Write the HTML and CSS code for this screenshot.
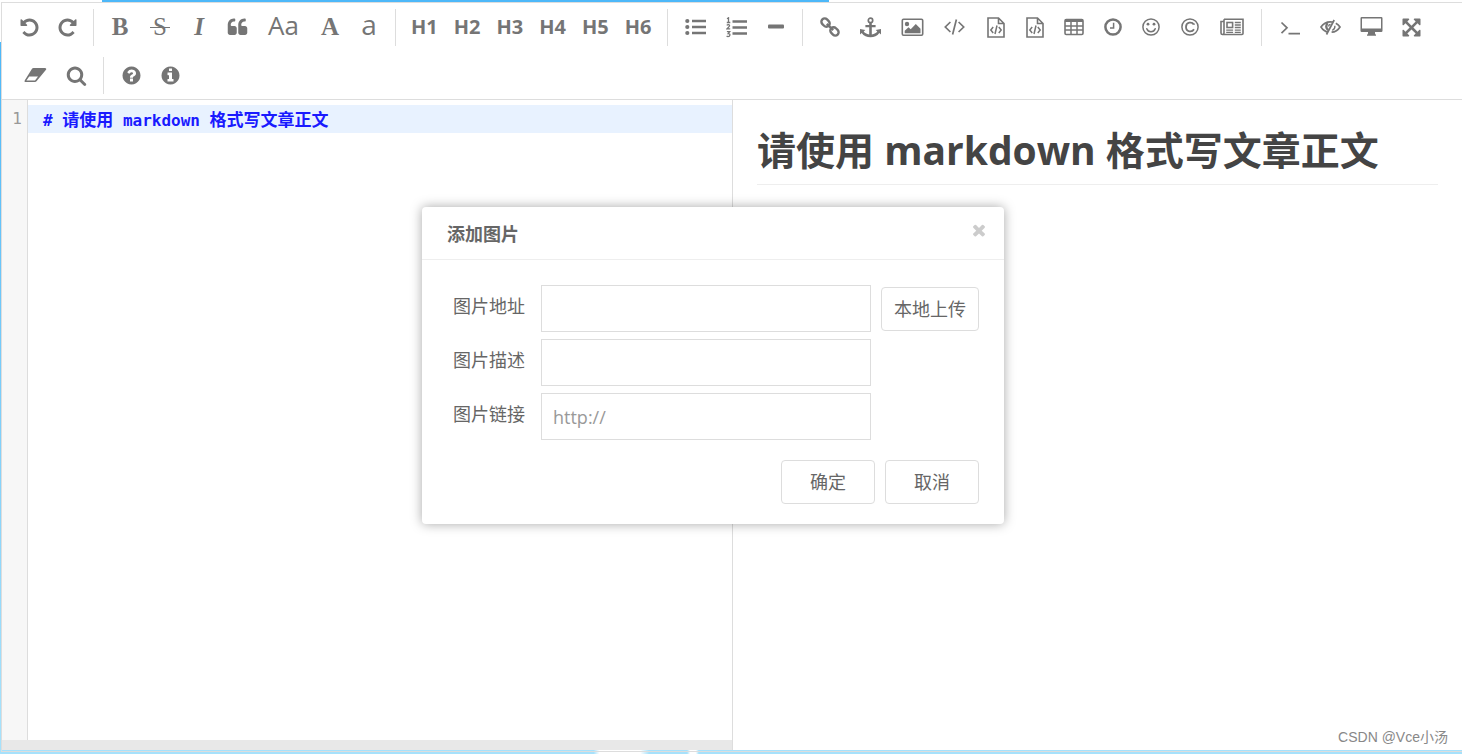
FILE: index.html
```
<!DOCTYPE html>
<html lang="zh-CN">
<head>
<meta charset="utf-8">
<title>Markdown 编辑器</title>
<link rel="stylesheet" href="styles.css">
</head>
<body class="page">
<main class="editor">
  <ul class="toolbar">
    <li><button class="tool" type="button" aria-label="撤销"><svg class="icon" width="21" height="21" viewBox="0 0 1792 1792"><path d="M1664 896q0 156-61 298t-164 245-245 164-298 61q-172 0-327-72.500t-264-204.500q-7-10-6.500-22.500t8.500-20.500l137-138q10-9 25-9 16 2 23 12 73 95 179 147t225 52q104 0 198.500-40.500t163.500-109.500 109.500-163.500 40.500-198.500-40.500-198.500-109.500-163.500-163.500-109.500-198.500-40.500q-98 0-188 35.500t-160 101.500l137 138q31 30 14 69-17 40-59 40h-448q-26 0-45-19t-19-45v-448q0-42 40-59 39-17 69 14l130 129q107-101 244.500-156.500t284.500-55.500q156 0 298 61t245 164 164 245 61 298z"/></svg></button></li>
    <li><button class="tool" type="button" aria-label="重做"><svg class="icon" width="21" height="21" viewBox="0 0 1792 1792"><path d="M1664 256v448q0 26-19 45t-45 19h-448q-42 0-59-40-17-39 14-69l138-138q-148-137-349-137-104 0-198.500 40.500t-163.500 109.500-109.500 163.500-40.500 198.500 40.500 198.500 109.500 163.500 163.500 109.500 198.500 40.500q119 0 225-52t179-147q7-10 23-12 15 0 25 9l137 138q9 8 9.500 20.500t-7.500 22.500q-109 132-264 204.500t-327 72.500q-156 0-298-61t-245-164-164-245-61-298 61-298 164-245 245-164 298-61q147 0 284.500 55.500t244.500 156.500l130-129q29-31 70-14 39 17 39 59z"/></svg></button></li>
    <li class="divider"></li>
    <li><button class="tool serif" type="button" aria-label="粗体">B</button></li>
    <li><button class="tool wide serif strike" type="button" aria-label="删除线">S</button></li>
    <li><button class="tool narrow serif italic" type="button" aria-label="斜体">I</button></li>
    <li><button class="tool medium" type="button" aria-label="引用"><svg class="icon" width="21" height="21" viewBox="0 0 1792 1792"><path d="M832 960v384q0 80-56 136t-136 56h-384q-80 0-136-56t-56-136v-704q0-104 40.500-198.500t109.500-163.500 163.500-109.500 198.500-40.500h64q26 0 45 19t19 45v128q0 26-19 45t-45 19h-64q-106 0-181 75t-75 181v32q0 40 28 68t68 28h224q80 0 136 56t56 136zM1728 960v384q0 80-56 136t-136 56h-384q-80 0-136-56t-56-136v-704q0-104 40.500-198.500t109.500-163.500 163.500-109.500 198.500-40.500h64q26 0 45 19t19 45v128q0 26-19 45t-45 19h-64q-106 0-181 75t-75 181v32q0 40 28 68t68 28h224q80 0 136 56t56 136z"/></svg></button></li>
    <li><button class="tool case" type="button" aria-label="首字母大写">Aa</button></li>
    <li><button class="tool medium serif" type="button" aria-label="大写">A</button></li>
    <li><button class="tool lower" type="button" aria-label="小写">a</button></li>
    <li class="divider"></li>
    <li><button class="tool heading" type="button">H1</button></li>
    <li><button class="tool heading" type="button">H2</button></li>
    <li><button class="tool heading" type="button">H3</button></li>
    <li><button class="tool heading" type="button">H4</button></li>
    <li><button class="tool heading" type="button">H5</button></li>
    <li><button class="tool heading" type="button">H6</button></li>
    <li class="divider"></li>
    <li><button class="tool wide" type="button" aria-label="无序列表"><svg class="icon" width="21" height="18" viewBox="0 0 21 18"><circle cx="2.300" cy="3" r="2.100"/><circle cx="2.300" cy="9" r="2.100"/><circle cx="2.300" cy="15" r="2.100"/><path d="M7 1.700h14v2.600H7zM7 7.700h14v2.600H7zM7 13.700h14v2.600H7z"/></svg></button></li>
    <li><button class="tool medium" type="button" aria-label="有序列表"><svg class="icon" width="21" height="21" viewBox="0 0 21 21"><path d="M6.500 3.200H21v2.600H6.500zM6.500 9.200H21v2.600H6.500zM6.500 15.200H21v2.600H6.500z"/><path class="line" stroke-width="1.300" d="M1 1.700l1.500-.9v4.700M.8 5.500h3.500M.8 8.400c1-1.200 3-.8 2.700.5-.2 1-1.800 1.700-2.600 3h3.300M.9 14.600h2.800l-1.500 2c2.600 0 2 3-.2 3q-.8 0-1.400-.5"/></svg></button></li>
    <li><button class="tool" type="button" aria-label="分隔线"><svg class="icon" width="16" height="18" viewBox="0 0 16 18"><rect y="6.500" width="16" height="4" rx="1"/></svg></button></li>
    <li class="divider"></li>
    <li><button class="tool medium" type="button" aria-label="链接"><svg class="icon line" width="20" height="20" viewBox="0 0 20 20"><g stroke-width="2.400" transform="rotate(45 10 10)"><rect x="-.8" y="6.700" width="9" height="6.600" rx="3.300"/><rect x="11.800" y="6.700" width="9" height="6.600" rx="3.300"/><path d="M5.500 10h9"/></g></svg></button></li>
    <li><button class="tool wide" type="button" aria-label="锚点"><svg class="icon" width="21" height="21" viewBox="0 0 21 21"><circle class="line" cx="10.500" cy="3.400" r="2.200" stroke-width="1.700"/><path d="M9.200 5.500h2.600V8h3.800v2.300h-3.800v7.100c2.600-.4 4.700-1.600 5.500-2.900l-1.600-1.500 5.300-.9v5.400l-1.700-1.600c-2 2.900-5.200 4.300-8.800 4.300s-6.800-1.400-8.800-4.300L0 17.500v-5.400l5.300.9-1.600 1.500c.8 1.300 2.900 2.500 5.500 2.900v-7.100H5.400V8h3.800z"/></svg></button></li>
    <li><button class="tool wide" type="button" aria-label="添加图片"><svg class="icon" width="23" height="19" viewBox="0 0 23 19"><rect class="line" x="1.300" y="1.300" width="20.400" height="16" rx="1.200" stroke-width="1.600"/><circle cx="6" cy="6" r="2.200"/><path d="M3.700 15.200v-2.400l3.800-3.600 2.200 2 5.100-5.300 4.700 4.800v4.500z"/></svg></button></li>
    <li><button class="tool wide" type="button" aria-label="行内代码"><svg class="icon line" width="21" height="18" viewBox="0 0 21 18"><path stroke-width="1.700" d="M6.400 4L1.300 9l5.100 5M14.600 4l5.100 5-5.100 5M12.400 1.500l-3.800 15"/></svg></button></li>
    <li><button class="tool medium" type="button" aria-label="预格式文本"><svg class="icon line" width="18" height="21" viewBox="0 0 18 21"><path stroke-width="1.600" d="M1 1h10.500L17 6.500V20H1zM11.500 1v5.500H17"/><path stroke-width="1.500" d="M6.200 10l-2.400 3 2.400 3M11.800 10l2.400 3-2.400 3M10 8.500l-2 8.500"/></svg></button></li>
    <li><button class="tool" type="button" aria-label="代码块"><svg class="icon line" width="18" height="21" viewBox="0 0 18 21"><path stroke-width="1.600" d="M1 1h10.500L17 6.500V20H1zM11.500 1v5.500H17"/><path stroke-width="1.500" d="M6.200 10l-2.400 3 2.400 3M11.800 10l2.400 3-2.400 3M10 8.500l-2 8.500"/></svg></button></li>
    <li><button class="tool medium" type="button" aria-label="表格"><svg class="icon line" width="20" height="18" viewBox="0 0 20 18"><rect x="1" y="1.500" width="18" height="15" rx="1.200" stroke-width="1.600"/><path stroke-width="3" d="M1 2.500h18"/><path stroke-width="1.500" d="M1 8h18M1 12h18M7 2v14M13 2v14"/></svg></button></li>
    <li><button class="tool" type="button" aria-label="日期时间"><svg class="icon line" width="18" height="18" viewBox="0 0 18 18"><circle cx="9" cy="9" r="7.600" stroke-width="2.500"/><path stroke-width="1.500" d="M9.600 4.800v5.100H6"/></svg></button></li>
    <li><button class="tool" type="button" aria-label="表情"><svg class="icon" width="18" height="18" viewBox="0 0 18 18"><circle class="line" cx="9" cy="9" r="8.100" stroke-width="1.500"/><circle cx="6" cy="6.200" r="1.400"/><circle cx="12" cy="6.200" r="1.400"/><path class="line" stroke-width="1.500" stroke-linecap="round" d="M4.800 10.800c1.400 4 7 4 8.400 0"/></svg></button></li>
    <li><button class="tool medium" type="button" aria-label="版权符号"><svg class="icon line" width="18" height="18" viewBox="0 0 18 18"><circle cx="9" cy="9" r="8.100" stroke-width="1.500"/><path stroke-width="1.800" d="M13 6.800V5.500M12.700 6.500c-1.600-3-7.700-2.600-7.700 2.500s6.100 5.500 8 2.300"/></svg></button></li>
    <li><button class="tool wider" type="button" aria-label="分页"><svg class="icon line" width="24" height="18" viewBox="0 0 24 18"><path stroke-width="1.600" d="M4 1.200h19v14.300q0 1-1 1H2.500q-1.500 0-1.500-1.500V3.500h3M4 1.200V15q0 1.500-1.500 1.500"/><rect x="7" y="4.500" width="5.600" height="5" stroke-width="1.600"/><path stroke-width="1.300" d="M14.800 4.500h6M14.800 7h6M14.800 9.500h6M6.200 12.200h6.900M14.800 12.200h6M6.200 14.300h6.900M14.800 14.300h6"/></svg></button></li>
    <li class="divider"></li>
    <li><button class="tool wide" type="button" aria-label="跳转到行"><svg class="icon line" width="20" height="18" viewBox="0 0 20 18"><path stroke-width="1.700" d="M1.500 4.500L7 9.800l-5.500 5.300M8.500 15.700H20"/></svg></button></li>
    <li><button class="tool medium" type="button" aria-label="关闭预览"><svg class="icon line" width="21" height="18" viewBox="0 0 21 18"><path stroke-width="1.700" d="M8.400 14.300C5 13.700 2.600 11.500 1 9c2.200-3.600 5.500-5.200 9.500-5.200 1 0 2 .1 2.800.4M15.800 5.200c1.800 1 3.200 2.300 4.200 3.800-1.900 3.100-4.700 5-8.400 5.200M14.200 2L6.500 16.500"/><path stroke-width="2.400" d="M8.200 12.100C5.800 10.500 5.700 7.200 7.500 5"/><path stroke-width="1.300" d="M8.600 8.500c0-1.200.8-2.100 2-2.200M12.300 12.400c1.900-.9 2.800-2.700 2.600-4.600"/></svg></button></li>
    <li><button class="tool wide" type="button" aria-label="全窗口预览"><svg class="icon" width="23" height="21" viewBox="0 0 23 21"><path fill-rule="evenodd" d="M1.700 0h19.600q1.200 0 1.200 1.200v12.600q0 1.200-1.200 1.200h-6.300v1.500l1 1.500v.7H7v-.7l1-1.500V15H1.700Q.5 15 .5 13.800V1.200Q.5 0 1.700 0zM2 1.500v10h19v-10z"/></svg></button></li>
    <li><button class="tool" type="button" aria-label="全屏"><svg class="icon" width="21" height="21" viewBox="0 0 1792 1792"><path d="M1411 541l-355 355 355 355 144-144q29-31 70-14 39 17 39 59v448q0 26-19 45t-45 19h-448q-42 0-59-40-17-39 14-69l144-144-355-355-355 355 144 144q31 30 14 69-17 40-59 40h-448q-26 0-45-19t-19-45v-448q0-42 40-59 39-17 69 14l144 144 355-355-355-355-144 144q-19 19-45 19-12 0-24-5-40-17-40-59v-448q0-26 19-45t45-19h448q42 0 59 40 17 39-14 69l-144 144 355 355 355-355-144-144q-31-30-14-69 17-40 59-40h448q26 0 45 19t19 45v448q0 42-39 59-13 5-25 5-26 0-45-19z"/></svg></button></li>
    <li class="spaced"><button class="tool wide" type="button" aria-label="清空"><svg class="icon" width="23" height="18" viewBox="0 0 23 18"><path fill-rule="evenodd" d="M9.500 2H21q1.700 0 1.200 1.500L12.500 15.300q-.6.700-1.500.7H1.300Q0 16 .7 14.500L8 2.800q.5-.8 1.500-.8zM5.200 10.600L2.400 14.600h8.600L14 10.600z"/></svg></button></li>
    <li><button class="tool medium" type="button" aria-label="搜索"><svg class="icon" width="21" height="21" viewBox="0 0 1792 1792"><path d="M1216 832q0-185-131.500-316.500t-316.500-131.500-316.500 131.500-131.500 316.500 131.500 316.500 316.500 131.500 316.500-131.500 131.500-316.500zm512 832q0 52-38 90t-90 38q-54 0-90-38l-343-342q-179 124-399 124-143 0-273.500-55.500t-225-150-150-225-55.500-273.500 55.500-273.500 150-225 225-150 273.500-55.500 273.500 55.500 225 150 150 225 55.500 273.500q0 220-124 399l343 343q37 37 37 90z"/></svg></button></li>
    <li class="divider"></li>
    <li><button class="tool medium" type="button" aria-label="帮助"><svg class="icon" width="21" height="21" viewBox="0 0 1792 1792"><path d="M1024 1376v-192q0-14-9-23t-23-9h-192q-14 0-23 9t-9 23v192q0 14 9 23t23 9h192q14 0 23-9t9-23zm256-672q0-88-55.500-163t-138.500-116-170-41q-243 0-371 213-15 24 8 42l132 100q7 6 19 6 16 0 25-12 53-68 86-92 34-24 86-24 48 0 85.500 26t37.500 59q0 38-20 61t-68 45q-63 28-115.500 86.500t-52.500 125.500v36q0 14 9 23t23 9h192q14 0 23-9t9-23q0-19 21.500-49.500t54.500-49.500q32-18 49-28.500t46-35 44.500-48 28-60.500 12.500-81zm384 192q0 209-103 385.500t-279.500 279.500-385.500 103-385.500-103-279.500-279.500-103-385.500 103-385.500 279.500-279.500 385.500-103 385.500 103 279.500 279.500 103 385.500z"/></svg></button></li>
    <li><button class="tool" type="button" aria-label="关于"><svg class="icon" width="21" height="21" viewBox="0 0 1792 1792"><path d="M1152 1376v-160q0-14-9-23t-23-9h-96v-512q0-14-9-23t-23-9h-320q-14 0-23 9t-9 23v160q0 14 9 23t23 9h96v320h-96q-14 0-23 9t-9 23v160q0 14 9 23t23 9h448q14 0 23-9t9-23zm-128-896v-160q0-14-9-23t-23-9h-192q-14 0-23 9t-9 23v160q0 14 9 23t23 9h192q14 0 23-9t9-23zm640 416q0 209-103 385.500t-279.500 279.500-385.500 103-385.500-103-279.500-279.500-103-385.500 103-385.500 279.500-279.500 385.500-103 385.500 103 279.500 279.500 103 385.500z"/></svg></button></li>
  </ul>

  <div class="panes">
    <section class="source">
      <div class="code">
        <div class="gutter">1</div>
        <div class="lines"><div class="line-active"># <span class="han">请使用</span> markdown <span class="han">格式写文章正文</span></div></div>
      </div>
      <div class="scrollbar"></div>
    </section>
    <section class="preview">
      <h1 class="title">请使用 markdown 格式写文章正文</h1>
    </section>
  </div>
</main>

<form class="dialog" role="dialog" aria-labelledby="dialog-title">
  <header class="dialog-head">
    <strong id="dialog-title">添加图片</strong>
    <button class="close" type="button" aria-label="关闭"><svg class="close-icon" width="18" height="18" viewBox="0 0 1792 1792"><path d="M1490 1322q0 40-28 68l-136 136q-28 28-68 28t-68-28l-294-294-294 294q-28 28-68 28t-68-28l-136-136q-28-28-28-68t28-68l294-294-294-294q-28-28-28-68t28-68l136-136q28-28 68-28t68 28l294 294 294-294q28-28 68-28t68 28l136 136q28 28 28 68t-28 68l-294 294 294 294q28 28 28 68z"/></svg></button>
  </header>
  <div class="fields">
    <label class="label" for="url">图片地址</label>
    <input class="input" id="url" type="text">
    <button class="btn" type="button">本地上传</button>
    <label class="label" for="alt">图片描述</label>
    <input class="input" id="alt" type="text">
    <label class="label" for="link">图片链接</label>
    <input class="input" id="link" type="text" placeholder="http://">
  </div>
  <footer class="actions">
    <button class="btn action" type="button">确定</button>
    <button class="btn action" type="button">取消</button>
  </footer>
</form>
<div class="credit">CSDN @Vce小汤</div>
</body>
</html>
```
FILE: styles.css
```
* {
  box-sizing: border-box;
}

.page {
  position: relative;
  display: flex;
  flex-direction: column;
  height: 100vh;
  margin: 0;
  padding: 2px 0 2px 1px;
  overflow: hidden;
  font-family: "Open Sans", "Noto Sans CJK SC", sans-serif;
  color: #666;
  background:
    linear-gradient(90deg, #fff 7%, #4db8f9 7%, #4db8f9 56.7%, #fff 56.7%) top / 100% 2px no-repeat,
    linear-gradient(90deg, #a6e1fb 40.6%, #fff 41%, #fff 43.8%, #a6e1fb 44.4%, #a6e1fb 47%, #fff 47.2%, #fff 47.6%, #a6e1fb 47.8%) bottom / 100% 4px no-repeat,
    linear-gradient(#fff 42px, #4db8f9 42px, #a6e1fb 95%) left / 1px 100% no-repeat,
    #fff;
}

.editor {
  display: flex;
  flex: 1;
  flex-direction: column;
  min-height: 0;
  border: 1px solid #ddd;
  border-right: 0;
}

.toolbar {
  display: flex;
  flex-wrap: wrap;
  align-items: center;
  margin: 0;
  padding: 0 10px 0 8px;
  list-style: none;
  background: #fff;
  border-bottom: 1px solid #ddd;
}

.tool {
  display: flex;
  align-items: center;
  justify-content: center;
  width: 38px;
  height: 48px;
  padding: 0;
  font: 20px "Open Sans", sans-serif;
  line-height: 48px;
  color: #757575;
  background: none;
  border: 0;
}

.narrow { width: 36px; }
.medium { width: 40px; }
.wide { width: 42px; }
.wider { width: 44px; }

.spaced {
  margin-left: 4px;
}

.serif {
  position: relative;
  font: bold 25px "Liberation Serif", serif;
}

.strike {
  font-weight: normal;
}

.strike::after {
  position: absolute;
  top: 24px;
  left: 11px;
  width: 20px;
  height: 1px;
  content: "";
  background: #757575;
}

.italic {
  font-style: italic;
}

.case {
  width: 53px;
  padding-bottom: 4px;
  font-size: 26px;
}

.lower {
  padding-bottom: 6px;
  font-size: 28px;
}

.heading {
  width: auto;
  padding: 0 8px;
  font-weight: bold;
}

.divider {
  width: 1px;
  height: 37px;
  margin: 0 7px;
  background: #ddd;
}

.icon {
  display: block;
  fill: #757575;
}

.line {
  fill: none;
  stroke: #757575;
}

.panes {
  display: grid;
  flex: 1;
  grid-template-columns: 1fr 1fr;
  min-height: 0;
  margin-bottom: 1px;
  background: #fff;
}

.source {
  display: flex;
  flex-direction: column;
}

.code {
  display: flex;
  flex: 1;
  font: 16px "DejaVu Sans Mono", "Noto Sans CJK SC", monospace;
  line-height: 28px;
}

.gutter {
  width: 26px;
  padding: 5px 5px 0;
  text-align: right;
  color: #999;
  background: #f7f7f7;
  border-right: 1px solid #ddd;
}

.lines {
  flex: 1;
  padding-top: 5px;
}

.line-active {
  height: 28px;
  padding-left: 15px;
  font-weight: bold;
  white-space: nowrap;
  color: #1a1aff;
  background: #e8f2ff;
}

.han {
  font-family: "Noto Sans CJK SC", sans-serif;
  font-size: 17px;
}

.scrollbar {
  height: 10px;
  background: #e8e8e8;
}

.preview {
  padding: 24px;
  border-left: 1px solid #ddd;
}

.title {
  margin: 0;
  padding-bottom: 8px;
  font-size: 39px;
  line-height: 52px;
  white-space: nowrap;
  color: #444;
  border-bottom: 1px solid #eee;
}

.dialog {
  position: absolute;
  top: 207px;
  left: calc(50% - 309px);
  width: 582px;
  font-size: 18px;
  background: #fff;
  border-radius: 4px;
  box-shadow: 0 0 12px rgba(0, 0, 0, 0.35);
}

.dialog-head {
  display: flex;
  align-items: center;
  justify-content: space-between;
  height: 53px;
  padding: 0 16px 0 25px;
  border-bottom: 1px solid #eee;
}

.close {
  padding: 0 0 6px;
  background: none;
  border: 0;
}

.close-icon {
  display: block;
  fill: #ccc;
}

.fields {
  display: grid;
  grid-template-columns: 80px 1fr 98px;
  row-gap: 7px;
  column-gap: 10px;
  align-items: center;
  padding: 25px 25px 20px 29px;
}

.label {
  grid-column: 1;
  padding: 0 0 6px 2px;
  line-height: 28px;
}

.input {
  width: 100%;
  height: 47px;
  padding: 0 11px;
  font: inherit;
  color: #666;
  background: #fff;
  border: 1px solid #ddd;
}

.input::placeholder {
  color: #999;
}

.btn {
  height: 44px;
  padding: 0 0 2px;
  font: inherit;
  color: #666;
  background: #fff;
  border: 1px solid #ddd;
  border-radius: 4px;
}

.actions {
  display: flex;
  gap: 10px;
  justify-content: flex-end;
  padding: 0 25px 20px;
}

.action {
  width: 94px;
}

.credit {
  position: absolute;
  right: 14px;
  bottom: 6px;
  font: 14px "Liberation Sans", "Noto Sans CJK SC", sans-serif;
  line-height: 22px;
  color: #888;
}
```
